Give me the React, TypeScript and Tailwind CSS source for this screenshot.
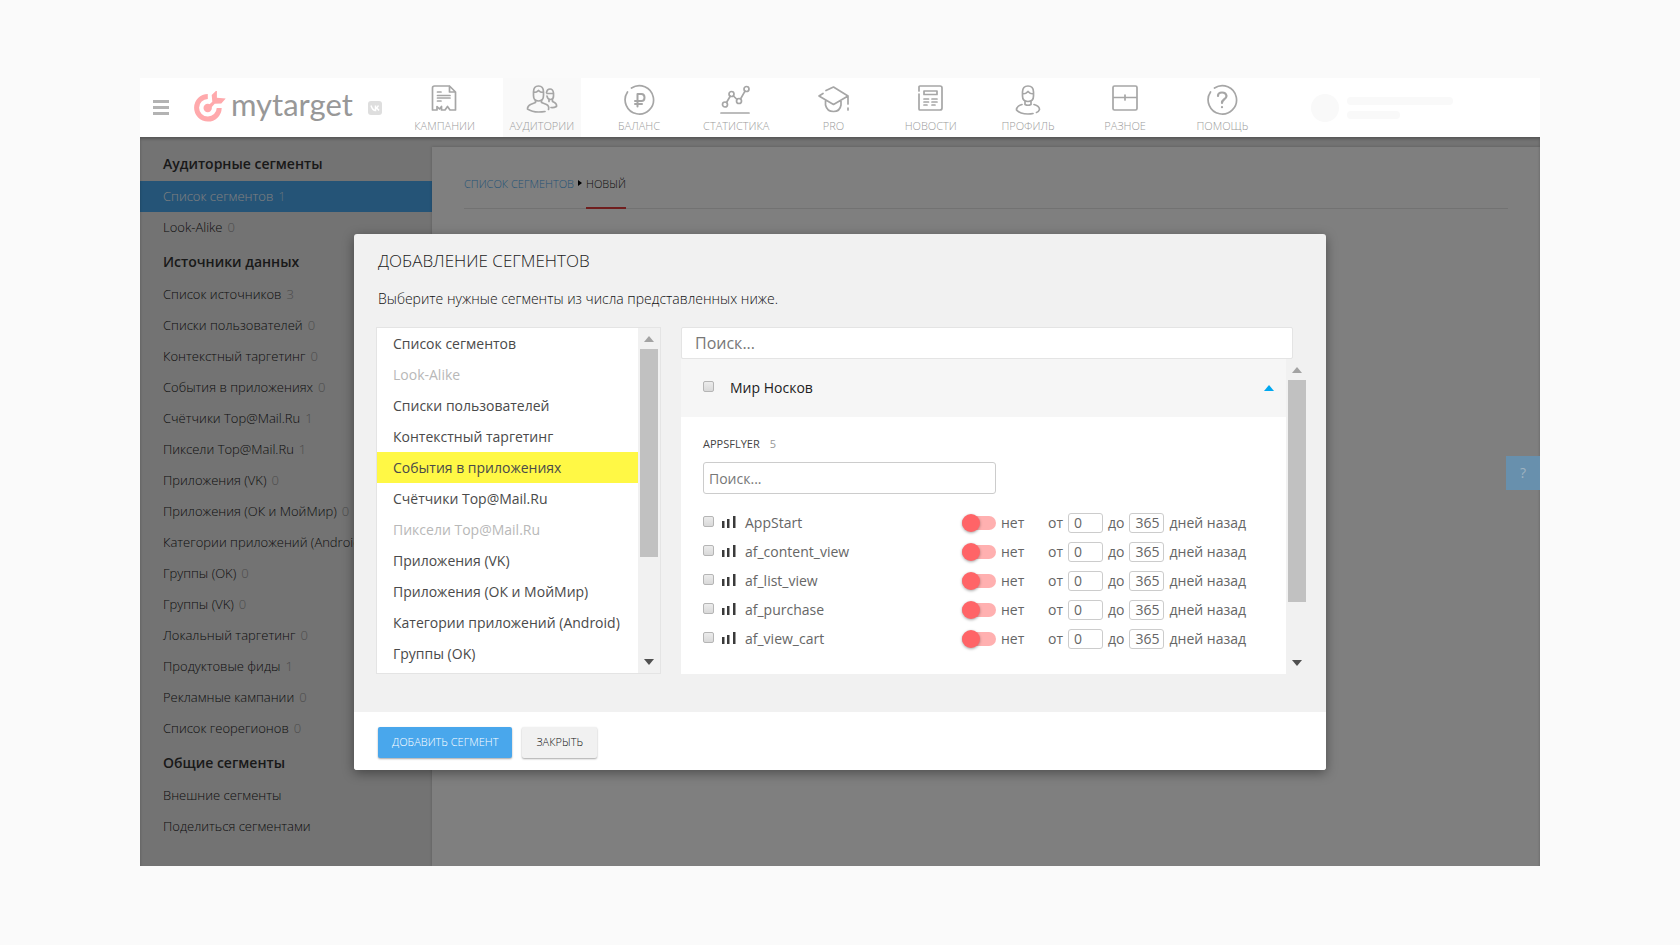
import type { ReactNode } from "react";

const sideGroups = [
  {
    title: "Аудиторные сегменты",
    items: [
      { label: "Список сегментов", count: 1, active: true },
      { label: "Look-Alike", count: 0 },
    ],
  },
  {
    title: "Источники данных",
    items: [
      { label: "Список источников", count: 3 },
      { label: "Списки пользователей", count: 0 },
      { label: "Контекстный таргетинг", count: 0 },
      { label: "События в приложениях", count: 0 },
      { label: "Счётчики Top@Mail.Ru", count: 1 },
      { label: "Пиксели Top@Mail.Ru", count: 1 },
      { label: "Приложения (VK)", count: 0 },
      { label: "Приложения (ОК и МойМир)", count: 0 },
      { label: "Категории приложений (Android)", count: 0 },
      { label: "Группы (OK)", count: 0 },
      { label: "Группы (VK)", count: 0 },
      { label: "Локальный таргетинг", count: 0 },
      { label: "Продуктовые фиды", count: 1 },
      { label: "Рекламные кампании", count: 0 },
      { label: "Список георегионов", count: 0 },
    ],
  },
  {
    title: "Общие сегменты",
    items: [{ label: "Внешние сегменты" }, { label: "Поделиться сегментами" }],
  },
] as {
  title: string;
  items: { label: string; count?: number; active?: boolean }[];
}[];

const sources = [
  { label: "Список сегментов" },
  { label: "Look-Alike", disabled: true },
  { label: "Списки пользователей" },
  { label: "Контекстный таргетинг" },
  { label: "События в приложениях", active: true },
  { label: "Счётчики Top@Mail.Ru" },
  { label: "Пиксели Top@Mail.Ru", disabled: true },
  { label: "Приложения (VK)" },
  { label: "Приложения (ОК и МойМир)" },
  { label: "Категории приложений (Android)" },
  { label: "Группы (OK)" },
];

const events = [
  "AppStart",
  "af_content_view",
  "af_list_view",
  "af_purchase",
  "af_view_cart",
];

const Icon = ({ children }: { children: ReactNode }) => (
  <svg
    width="32"
    height="32"
    viewBox="0 0 32 32"
    fill="none"
    stroke="#a6a6a6"
    strokeWidth="1.7"
    strokeLinecap="round"
    strokeLinejoin="round"
    aria-hidden="true"
  >
    {children}
  </svg>
);

const navItems: { label: string; active?: boolean; icon: ReactNode }[] = [
  {
    label: "Кампании",
    icon: (
      <Icon>
        <path d="M20.5 2H5.5Q3.5 2 3.5 4V26H8V22.5L10.5 25L12.5 22.5V26H16L18.5 22.5L21 26H26.5V8L20.5 2V8H26.5" />
        <path d="M8.5 8H12M8.5 11.5H21M8.5 14H21M8.5 17H12" />
      </Icon>
    ),
  },
  {
    label: "Аудитории",
    active: true,
    icon: (
      <Icon>
        <path d="M7.5 8Q7.5 2 12.5 2T17.5 8V11.5Q17.5 17 12.5 17T7.5 11.5ZM7.5 8.5Q11 8.5 12.5 6.5Q14 8.5 17.5 8.5" />
        <path d="M9.5 16.5V18.5L4.5 20.5Q1.5 22 1.5 25Q6 28 12.5 28Q16 28 19 27.5M15.5 16.5V18.5L20.5 20.5Q23.5 22 22.5 25.5" />
        <path d="M20.5 8.5Q21 5 24 5T27.5 9V12Q27.5 15.5 24.5 15.5T21 12M21 9.5H27M23 15.5V17.5M26.5 15.5V17.5L28.5 18.5Q31 20 30.5 22.5Q27.5 24 25 23.5" />
      </Icon>
    ),
  },
  {
    label: "Баланс",
    icon: (
      <Icon>
        <path d="M8.5 4A14.2 14.2 0 1 1 4.5 8" />
        <path strokeWidth="2" d="M14.5 22.5V10H18.5Q21.5 10 21.5 13.5T18.5 17H12M12 20H19" />
      </Icon>
    ),
  },
  {
    label: "Статистика",
    icon: (
      <Icon>
        <circle cx="5" cy="20.5" r="2.5" />
        <circle cx="11.5" cy="10" r="2.5" />
        <circle cx="19" cy="17" r="2.5" />
        <circle cx="26.5" cy="5" r="2.5" />
        <path d="M6.5 18.5L10.2 12.2M13.5 12L17 15.5M20.5 15L25 7.2M1 29H29" />
      </Icon>
    ),
  },
  {
    label: "Pro",
    icon: (
      <Icon>
        <path d="M9 6.5L16.5 3L31 12L16.5 20.5L2 12L6 9.5M8.5 17V21Q10 27.5 16.5 27.5T24 21V17M31 12V20M31 24V26" />
      </Icon>
    ),
  },
  {
    label: "Новости",
    icon: (
      <Icon>
        <path d="M4 7V3Q4 2 5 2H25Q27 2 27 4V24Q27 26 25 26H5Q4 26 4 25V10" />
        <path d="M9 7H22V10.5H9ZM9 15H13.5M9 18H13.5M9 21H12M17 15H22M17 18H22M17 21H20" />
      </Icon>
    ),
  },
  {
    label: "Профиль",
    icon: (
      <Icon>
        <path d="M10.5 8Q10.5 2 16 2T21.5 8V12Q21.5 17.5 16 17.5T10.5 12ZM10.5 10Q14 10 16 7.5Q18 10 21.5 10" />
        <path d="M13 17.5V20.5Q16 22 19 20.5V17.5M10 20.5Q4.5 22 4.5 26Q8 30 16 30Q19 30 21 29.5M22 20.5Q27.5 22 27.5 25.5Q26.5 28 24.5 28.5" />
      </Icon>
    ),
  },
  {
    label: "Разное",
    icon: (
      <Icon>
        <path d="M5.5 2H26.5Q28 2 28 3.5V24.5Q28 26 26.5 26H5.5Q4 26 4 24.5V3.5Q4 2 5.5 2ZM4 13.5H28M16 11V16" />
      </Icon>
    ),
  },
  {
    label: "Помощь",
    icon: (
      <Icon>
        <path d="M8.5 4A14.2 14.2 0 1 1 4.5 8" />
        <path strokeWidth="2.2" d="M12 12Q12 8.5 16 8.5T20.5 12Q20.5 14 18 15.5Q16 17 16 19M16 23V23.2" />
      </Icon>
    ),
  },
];

const Logo = () => (
  <a href="#" className="flex items-center gap-1">
    <svg width="34" height="34" viewBox="0 0 34 34" fill="none" aria-hidden="true">
      <path
        d="M14.8 5.5A11.3 11.3 0 1 0 26.2 17"
        stroke="#ffa9ac"
        strokeWidth="5"
      />
      <path d="M23.9 -1V6.8L32.7 7.5L28.3 12.5L21.7 12.8L17 18L14 15.5L19.3 10.8L18.7 4Z" fill="#ffa9ac" />
      <circle cx="14.7" cy="17" r="4.2" fill="#ffa9ac" />
    </svg>
    <span className="w-[123px] pb-2 font-['Lato'] text-[31px] leading-[34px] text-[#989898]">
      mytarget
    </span>
  </a>
);

const VkBadge = () => (
  <svg width="14" height="14" viewBox="0 0 14 14" aria-hidden="true">
    <rect width="14" height="14" rx="3" fill="#dedede" />
    <path
      d="M3 4.5Q4.5 9.5 7.5 9.5V4.5M7.5 7Q9.5 7 10.5 4.5M7.5 7Q9.5 7 11 9.5"
      fill="none"
      stroke="#fff"
      strokeWidth="1.5"
    />
  </svg>
);

const Triangle = ({ down, className }: { down?: boolean; className: string }) => (
  <svg width="10" height="6" viewBox="0 0 10 6" className={className} aria-hidden="true">
    <path d={down ? "M0 0H10L5 6Z" : "M0 6H10L5 0Z"} fill="currentColor" />
  </svg>
);

const Bars = () => (
  <svg width="14" height="14" viewBox="0 0 14 14" fill="#3a3a3a" aria-hidden="true">
    <path d="M0 5H2.5V12H0ZM5 3H7.5V12H5ZM11 0H13.5V12H11Z" />
  </svg>
);

const Checkbox = ({ id }: { id: string }) => (
  <input
    id={id}
    type="checkbox"
    className="mb-[3px] size-[11px] shrink-0 appearance-none rounded-[2px] border border-[#b5b5b5] bg-linear-to-b from-[#ececec] to-[#d9d9d9]"
  />
);

const ScrollBar = ({ thumb }: { thumb: string }) => (
  <div className="flex w-[22px] flex-col items-center bg-[#f1f1f1] py-2">
    <Triangle className="text-[#a3a3a3]" />
    <div className={`mt-[7px] w-[18px] bg-[#c1c1c1] ${thumb}`} />
    <Triangle down className="mt-auto text-[#505050]" />
  </div>
);

const DayInput = ({ label, value }: { label: string; value: string }) => (
  <input
    aria-label={label}
    defaultValue={value}
    className="h-5 w-[35px] rounded-[3px] border border-[#ccc] bg-white pl-[5px] text-sm text-[#666]"
  />
);

const Header = () => (
  <header className="flex h-[59px] bg-white">
    <div className="flex w-[256px] shrink-0 items-center">
      <button type="button" aria-label="Меню" className="ml-[13px] flex w-4 flex-col gap-[3px]">
        <span className="h-[3px] bg-[#b3b3b3]" />
        <span className="h-[3px] bg-[#b3b3b3]" />
        <span className="h-[3px] bg-[#b3b3b3]" />
      </button>
      <div className="ml-6 flex items-center gap-[14px]">
        <Logo />
        <VkBadge />
      </div>
    </div>
    <nav className="grid w-[875px] shrink-0 grid-cols-9">
      {navItems.map((item) => (
        <a
          key={item.label}
          href="#"
          className={`mx-auto flex w-[78px] flex-col items-center pt-[6px] ${
            item.active ? "bg-[#f9f9f9]" : ""
          }`}
        >
          {item.icon}
          <span className="text-[11px] leading-[19px] font-light text-[#9b9b9b] uppercase">
            {item.label}
          </span>
        </a>
      ))}
    </nav>
    <div className="ml-10 flex items-center gap-2">
      <div className="size-7 rounded-full bg-[#f9f9f9]" />
      <div className="flex flex-col gap-[6px]">
        <div className="h-2 w-[106px] rounded-sm bg-[#f9f9f9]" />
        <div className="h-2 w-[53px] rounded-sm bg-[#f9f9f9]" />
      </div>
    </div>
  </header>
);

const Sidebar = () => (
  <aside className="w-[292px] shrink-0 pt-2 pb-6">
    {sideGroups.map((group) => (
      <section key={group.title}>
        <h2 className="flex h-9 items-center px-[23px] pt-px text-sm font-semibold text-[#333]">
          {group.title}
        </h2>
        <ul>
          {group.items.map((item) => (
            <li key={item.label}>
              <a
                href="#"
                className={`flex h-[31px] items-center gap-[5px] px-[23px] text-[13px] font-light whitespace-nowrap ${
                  item.active ? "bg-[#4aa8ee] text-white" : "text-[#222]"
                }`}
              >
                {item.label}
                {item.count !== undefined && (
                  <span className={item.active ? "text-[#c5e2f8]" : "text-[#999]"}>
                    {item.count}
                  </span>
                )}
              </a>
            </li>
          ))}
        </ul>
      </section>
    ))}
  </aside>
);

const EventRow = ({ name }: { name: string }) => (
  <li className="flex h-[29px] items-center text-sm text-[#666]">
    <Checkbox id={name} />
    <label htmlFor={name} className="ml-2 flex w-[240px] items-center gap-[9px]">
      <Bars />
      {name}
    </label>
    <label className="flex w-[86px] items-center gap-[5px]">
      <input type="checkbox" role="switch" className="peer sr-only" />
      <span className="flex h-[14px] w-[34px] items-center rounded-full bg-[#ffb0b0]">
        <span className="size-[18px] shrink-0 rounded-full bg-[#ff6467] shadow-[0_1px_3px_rgba(0,0,0,0.35)]" />
      </span>
      нет
    </label>
    <div className="flex items-center gap-[5px] whitespace-nowrap">
      <span>от</span>
      <DayInput label={`${name}: от`} value="0" />
      <span>до</span>
      <DayInput label={`${name}: до`} value="365" />
      <span>дней назад</span>
    </div>
  </li>
);

const SegmentDialog = () => (
  <div
    role="dialog"
    aria-labelledby="dialog-title"
    className="absolute inset-x-[214px] top-[97px] overflow-hidden rounded-[3px] bg-[#f1f1f1] shadow-[0_3px_12px_rgba(0,0,0,0.4)]"
  >
    <div className="pt-[14px] pr-[18px] pb-[38px] pl-6">
      <h1 id="dialog-title" className="text-[17px] leading-[26px] font-light text-[#222] uppercase">
        Добавление сегментов
      </h1>
      <p className="mt-3 text-sm leading-[26px] font-light text-[#111]">
        Выберите нужные сегменты из числа представленных ниже.
      </p>
      <div className="mt-[15px] flex gap-5">
        <div className="-ml-[2px] flex h-[347px] w-[285px] shrink-0 overflow-hidden border border-[#e4e4e4] bg-white">
          <ul className="flex-1">
            {sources.map((item) => (
              <li key={item.label}>
                <button
                  type="button"
                  disabled={item.disabled}
                  className={`flex h-[31px] w-full items-center px-4 text-sm whitespace-nowrap ${
                    item.active ? "bg-[#fff845]" : ""
                  } ${item.disabled ? "text-[#b8b8b8]" : "text-[#4a4a4a]"}`}
                >
                  {item.label}
                </button>
              </li>
            ))}
          </ul>
          <ScrollBar thumb="h-[208px]" />
        </div>
        <div className="flex h-[347px] flex-1 flex-col">
          <input
            aria-label="Поиск сегмента"
            placeholder="Поиск..."
            className="mr-[15px] h-8 shrink-0 rounded-[2px] border border-[#e4e4e4] bg-white px-[13px] text-base placeholder:text-[#777]"
          />
          <div className="flex min-h-0 flex-1">
            <div className="flex-1 bg-white">
              <div className="flex h-[58px] items-center bg-[#f6f6f6] pr-3 pl-[22px]">
                <Checkbox id="group" />
                <label htmlFor="group" className="ml-4 text-sm text-[#222]">
                  Мир Носков
                </label>
                <button type="button" aria-label="Свернуть" className="ml-auto">
                  <Triangle className="text-[#00a8f0]" />
                </button>
              </div>
              <div className="pl-[22px]">
                <h3 className="flex gap-[10px] pt-[18px] text-[11px] leading-[18px] text-[#444] uppercase">
                  AppsFlyer <span className="text-[#999]">5</span>
                </h3>
                <input
                  aria-label="Поиск события"
                  placeholder="Поиск..."
                  className="mt-[9px] h-8 w-[293px] rounded-[3px] border border-[#ccc] bg-white px-[5px] text-sm placeholder:text-[#777]"
                />
                <ul className="mt-[14px]">
                  {events.map((name) => (
                    <EventRow key={name} name={name} />
                  ))}
                </ul>
              </div>
            </div>
            <ScrollBar thumb="h-[222px]" />
          </div>
        </div>
      </div>
    </div>
    <div className="flex h-[58px] gap-[10px] bg-white px-6 pt-[15px]">
      <button
        type="button"
        className="h-[31px] rounded-[2px] bg-[#49a7ec] px-[14px] text-[11px] font-light text-white uppercase shadow-[0_1px_2px_rgba(0,0,0,0.35)]"
      >
        Добавить сегмент
      </button>
      <button
        type="button"
        className="h-[31px] rounded-[2px] bg-[#f1f1f1] px-[14px] text-[11px] font-light text-[#111] uppercase shadow-[0_1px_2px_rgba(0,0,0,0.35)]"
      >
        Закрыть
      </button>
    </div>
  </div>
);

export default function App() {
  return (
    <div className="min-h-screen bg-[#fafafa] py-[78px] font-['Open_Sans',sans-serif]">
      <div className="mx-auto max-w-[1400px]">
        <Header />
        <div className="relative flex overflow-hidden bg-[#e6e6e6]">
          <Sidebar />
          <main className="mt-[10px] flex-1 bg-white px-8 shadow-[0_0_3px_rgba(0,0,0,0.2)]">
            <nav className="flex items-start gap-1 border-b border-[#e5e5e5] pt-[26px] text-[11px] leading-[22px] font-light uppercase">
              <a href="#" className="text-[#4aa8ee]">
                Список сегментов
              </a>
              <svg width="4" height="6" viewBox="0 0 4 6" className="mt-[7px]" aria-hidden="true">
                <path d="M0 0L4 3L0 6Z" />
              </svg>
              <span className="-mb-px border-b-2 border-[#e03c3c] pb-[12px] text-[#222]">
                Новый
              </span>
            </nav>
          </main>
          <div className="absolute inset-0 bg-black/50 shadow-[inset_0_2px_3px_rgba(0,0,0,0.25)]" />
          <button
            type="button"
            className="absolute top-[319px] right-0 h-[34px] w-[34px] bg-[#6890ad] text-sm text-[#9fb3c0]"
          >
            ?
          </button>
          <SegmentDialog />
        </div>
      </div>
    </div>
  );
}
